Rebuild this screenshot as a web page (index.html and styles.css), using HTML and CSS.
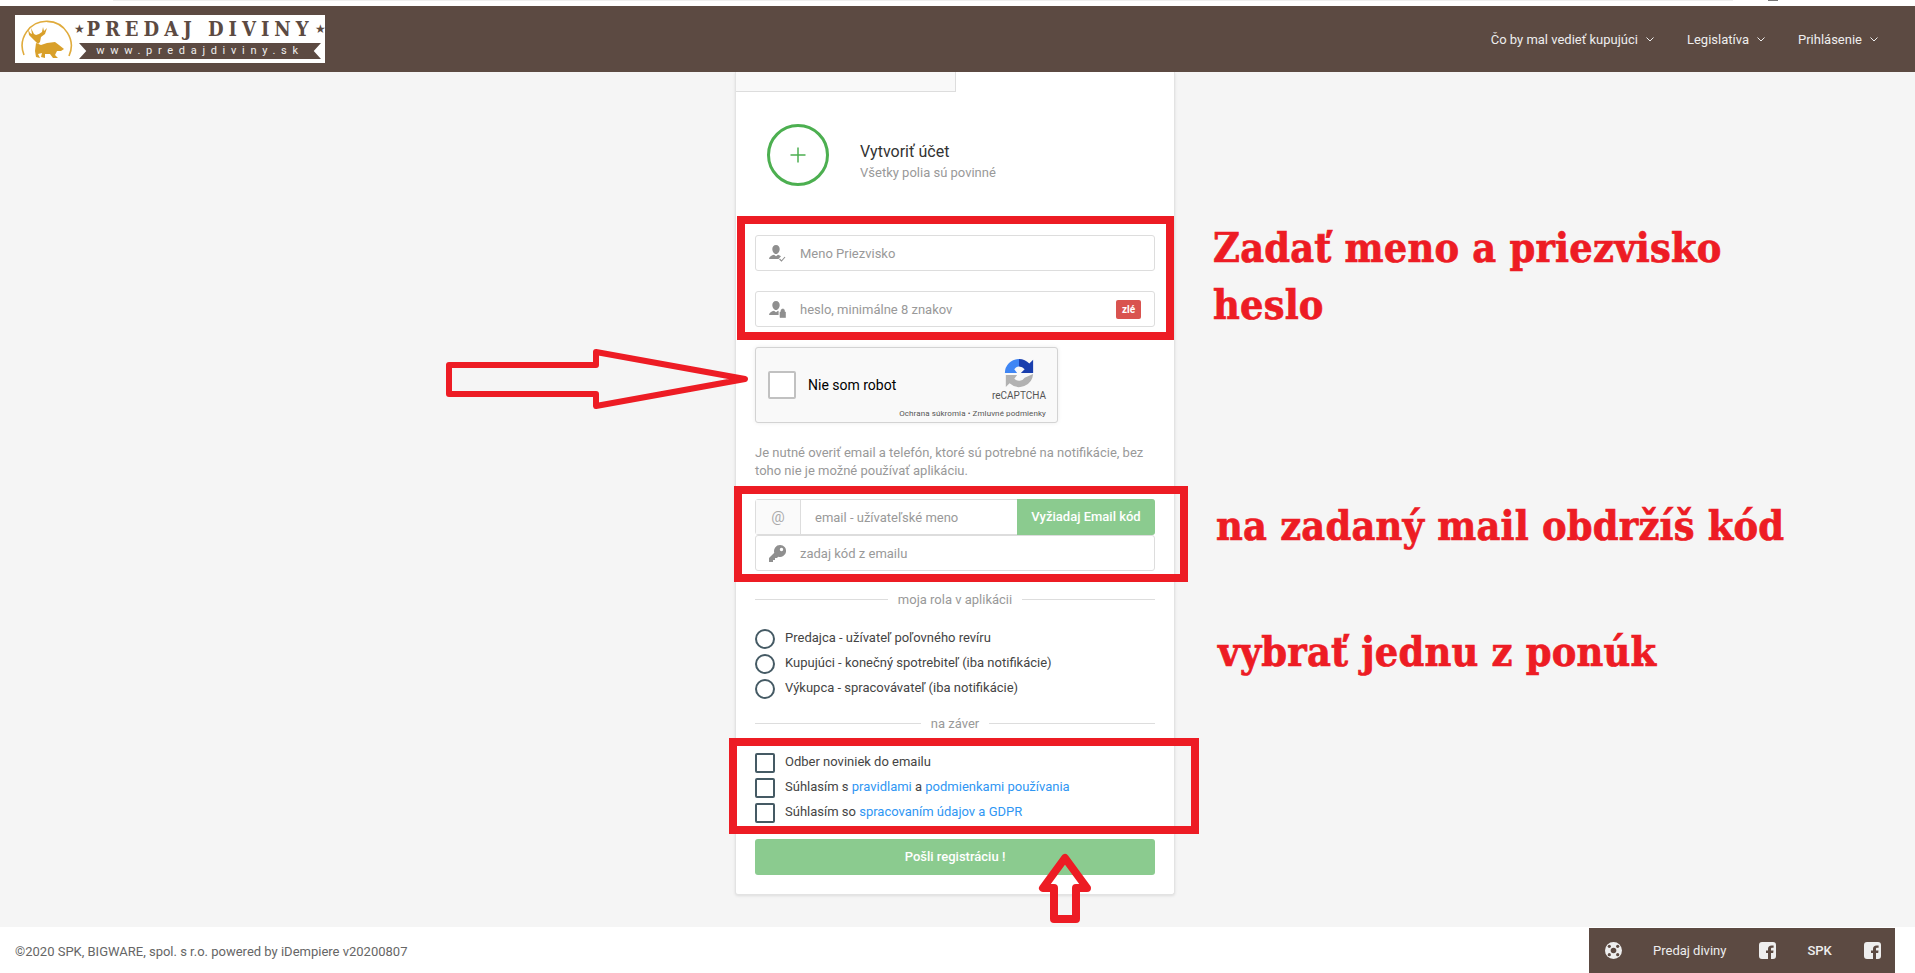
FILE: index.html
```html
<!DOCTYPE html>
<html>
  <head>
    <meta charset="utf-8">
    <title>Predaj diviny</title>
    <link rel="stylesheet" href="styles.css">
  </head>
  <body>
    <div class="topstrip"><span class="topstrip-line"></span><span class="topstrip-mark"></span></div>

    <header class="header">
      <a class="logo">
        <svg class="logo-emblem" width="60" height="48" viewBox="0 0 60 48">
          <path d="M9 40 A24.500 24.500 0 1 1 54 41" fill="none" stroke="#e0ab3c" stroke-width="1.600"/>
          <path d="M19 25 L14 20 L13 14 L15 18 L17 19 L16 13 L19 19 L21 20 L24 19 L27 17 L28 12 L29 16 L32 13 L30 19 L26 22 L25 27 L23 29 Z" fill="#d9a02a"/>
          <path d="M21 28 L26 30 L32 28 L40 27 L44 30 L49 34 L46 36 L42 36 L40 40 L43 43 L38 43 L35 39 L30 39 L30 43 L26 42 L27 38 L23 39 L25 43 L21 42 L20 36 Z" fill="#d9a02a"/>
        </svg>
        <div class="logo-text">
          <div class="logo-title"><span class="logo-star">★</span><span class="logo-name">PREDAJ DIVINY</span><span class="logo-star">★</span></div>
          <div class="logo-ribbon">www.predajdiviny.sk</div>
        </div>
      </a>
      <nav class="nav">
        <a>Čo by mal vedieť kupujúci<svg class="chevron" width="8" height="5" viewBox="0 0 8 5"><path d="M.5.5L4 4 7.500.5" fill="none" stroke="#eee"/></svg></a>
        <a>Legislatíva<svg class="chevron" width="8" height="5" viewBox="0 0 8 5"><path d="M.5.5L4 4 7.500.5" fill="none" stroke="#eee"/></svg></a>
        <a>Prihlásenie<svg class="chevron" width="8" height="5" viewBox="0 0 8 5"><path d="M.5.5L4 4 7.500.5" fill="none" stroke="#eee"/></svg></a>
      </nav>
    </header>

    <main class="main">
      <div class="card">
        <div class="tab"></div>

        <div class="card-head">
          <div class="plus-circle"><svg width="16" height="16" viewBox="0 0 16 16"><path d="M8 .5v15M.5 8h15" stroke="#4caf50" stroke-width="1.500"/></svg></div>
          <div class="card-titles">
            <div class="card-title">Vytvoriť účet</div>
            <div class="card-sub">Všetky polia sú povinné</div>
          </div>
        </div>

        <div class="field field-name">
          <svg class="field-icon" width="17" height="17" viewBox="0 0 17 17">
            <path d="M7 0c2.300 0 3.700 1.700 3.700 4S9.300 9 7 9 3.300 6.300 3.300 4 4.700 0 7 0zM0 14c.3-2.700 2.500-3.600 5-4.300l2 1.500 2-1.500c1.300.4 2.300.8 3 1.500L9.500 14z" fill="#8f8f8f"/>
            <path d="M10.500 14l2 2 3.500-4" fill="none" stroke="#8f8f8f" stroke-width="1.100"/>
          </svg>
          <span class="placeholder">Meno Priezvisko</span>
        </div>

        <div class="field field-pass">
          <svg class="field-icon" width="17" height="17" viewBox="0 0 17 17">
            <path d="M7 0c2.300 0 3.700 1.700 3.700 4S9.300 9 7 9 3.300 6.300 3.300 4 4.700 0 7 0zM0 14c.3-2.700 2.500-3.600 5-4.300l2 1.500 2-1.500.6.200V14z" fill="#8f8f8f"/>
            <path d="M11 11h5.500v5.500H11zM12 11V9.500c0-2 3.500-2 3.500 0V11" fill="#8f8f8f" stroke="#8f8f8f" stroke-width=".6" fill-rule="evenodd"/>
          </svg>
          <span class="placeholder">heslo, minimálne 8 znakov</span>
          <span class="badge">zlé</span>
        </div>

        <div class="captcha">
          <span class="captcha-box"></span>
          <span class="captcha-label">Nie som robot</span>
          <div class="captcha-brand">
            <svg width="32" height="32" viewBox="0 0 34 34">
              <path d="M2 17A15 15 0 0 1 17 2v8a7 7 0 0 0-5 3l3 4H2z" fill="#3f86f4"/>
              <path d="M17 2a15 15 0 0 1 11 5l4-4v14H19l4-4a8 8 0 0 0-6-3z" fill="#1a3fae"/>
              <path d="M32 18A15 15 0 0 1 7 28l-4 4V19h12l-3 4a7 7 0 0 0 11-1z" fill="#b2b2b2"/>
            </svg>
            <div class="captcha-name">reCAPTCHA</div>
          </div>
          <div class="captcha-links">Ochrana súkromia • Zmluvné podmienky</div>
        </div>

        <p class="note">Je nutné overiť email a telefón, ktoré sú potrebné na notifikácie, bez toho nie je možné používať aplikáciu.</p>

        <div class="email-group">
          <span class="addon">@</span>
          <span class="placeholder email-input">email - užívateľské meno</span>
          <span class="btn-code">Vyžiadaj Email kód</span>
        </div>

        <div class="field field-code">
          <svg class="field-icon" width="17" height="17" viewBox="0 0 17 17">
            <path d="M11 0a6 6 0 1 1-1.800 11.700L8 13H6v2H4v2H0v-4l5.300-5.200A6 6 0 0 1 11 0zm1.500 2.800a1.700 1.700 0 1 0 0 3.400 1.700 1.700 0 0 0 0-3.400z" fill="#8f8f8f" fill-rule="evenodd"/>
          </svg>
          <span class="placeholder">zadaj kód z emailu</span>
        </div>

        <div class="separator sep-role"><span>moja rola v aplikácii</span></div>

        <div class="options options-role">
          <label class="option"><span class="radio"></span>Predajca - užívateľ poľovného revíru</label>
          <label class="option"><span class="radio"></span>Kupujúci - konečný spotrebiteľ (iba notifikácie)</label>
          <label class="option"><span class="radio"></span>Výkupca - spracovávateľ (iba notifikácie)</label>
        </div>

        <div class="separator sep-end"><span>na záver</span></div>

        <div class="options options-end">
          <label class="option"><span class="check"></span>Odber noviniek do emailu</label>
          <label class="option"><span class="check"></span>Súhlasím s&nbsp;<a>pravidlami</a>&nbsp;a&nbsp;<a>podmienkami používania</a></label>
          <label class="option"><span class="check"></span>Súhlasím so&nbsp;<a>spracovaním údajov a GDPR</a></label>
        </div>

        <div class="btn-send">Pošli registráciu !</div>
      </div>
    </main>

    <footer class="footer">
      <div class="copyright">©2020 SPK, BIGWARE, spol. s r.o. powered by iDempiere v20200807</div>
      <div class="footer-links">
        <svg class="ring" width="17" height="17" viewBox="0 0 17 17">
          <circle cx="8.500" cy="8.500" r="8.500" fill="#eee"/>
          <circle cx="8.500" cy="8.500" r="2.800" fill="#5c4a42"/>
          <circle cx="4.300" cy="4.300" r="1.600" fill="#5c4a42"/>
          <circle cx="12.700" cy="4.300" r="1.600" fill="#5c4a42"/>
          <circle cx="4.300" cy="12.700" r="1.600" fill="#5c4a42"/>
          <circle cx="12.700" cy="12.700" r="1.600" fill="#5c4a42"/>
        </svg>
        <a class="footer-name">Predaj diviny</a>
        <svg class="fb fb-first" width="17" height="17" viewBox="0 0 17 17">
          <path d="M3 0h11a3 3 0 0 1 3 3v11a3 3 0 0 1-3 3h-2v-6h2.200l.3-2.500H12V7c0-.8.300-1.200 1.200-1.200h1.400V3.500h-2C10.300 3.500 9 5 9 7v1.500H7V11h2v6H3a3 3 0 0 1-3-3V3a3 3 0 0 1 3-3z" fill="#eee"/>
        </svg>
        <a class="footer-spk">SPK</a>
        <svg class="fb fb-last" width="17" height="17" viewBox="0 0 17 17">
          <path d="M3 0h11a3 3 0 0 1 3 3v11a3 3 0 0 1-3 3h-2v-6h2.200l.3-2.500H12V7c0-.8.300-1.200 1.200-1.200h1.400V3.500h-2C10.300 3.500 9 5 9 7v1.500H7V11h2v6H3a3 3 0 0 1-3-3V3a3 3 0 0 1 3-3z" fill="#eee"/>
        </svg>
      </div>
    </footer>

    <!-- red marks painted over the screenshot -->
    <svg class="marks" width="1915" height="973" viewBox="0 0 1915 973">
      <g fill="none" stroke="#ed1c24" stroke-width="8">
        <rect x="741" y="220" width="429" height="116"/>
        <rect x="738" y="490" width="446" height="88"/>
        <rect x="733" y="742" width="462" height="88"/>
      </g>
      <path d="M449 365H596V352L745 379L596 406V394H449Z" fill="none" stroke="#ed1c24" stroke-width="6" stroke-linejoin="round"/>
      <path d="M1065 858L1043 888H1054V919H1076V888H1087Z" fill="none" stroke="#ed1c24" stroke-width="8" stroke-linejoin="round"/>
    </svg>
    <div class="mark-text mark-name">Zadať meno a priezvisko<br>heslo</div>
    <div class="mark-text mark-mail">na zadaný mail obdržíš kód</div>
    <div class="mark-text mark-pick">vybrať jednu z ponúk</div>
  </body>
</html>
```

FILE: styles.css
```css
* {
  box-sizing: border-box;
}

html,
body {
  margin: 0;
  padding: 0;
}

body {
  display: flex;
  flex-direction: column;
  height: 973px;
  overflow: hidden;
  position: relative;
  font-family: Roboto, Arial, sans-serif;
  font-size: 13px;
  background-color: #fff;
  color: #444;
}

.topstrip {
  height: 6px;
  flex-shrink: 0;
  display: flex;
  background-color: #fff;
}

.topstrip-line {
  width: 1620px;
  height: 1px;
  margin-left: 113px;
  background-color: #eee;
}

.topstrip-mark {
  width: 10px;
  height: 1px;
  margin-left: 35px;
  background-color: #777;
}

.header {
  height: 66px;
  flex-shrink: 0;
  display: flex;
  align-items: center;
  justify-content: space-between;
  padding: 0 37px 0 15px;
  background-color: #5c4a42;
  z-index: 2;
}

.logo {
  width: 310px;
  height: 48px;
  display: flex;
  background-color: #fff;
}

.logo-emblem {
  flex-shrink: 0;
}

.logo-text {
  display: flex;
  flex-direction: column;
  align-items: center;
  width: 250px;
}

.logo-title {
  display: flex;
  align-items: center;
  height: 28px;
  color: #5c4a42;
  white-space: nowrap;
}

.logo-name {
  font-family: "DejaVu Serif Condensed", "DejaVu Serif", serif;
  font-weight: bold;
  font-size: 20px;
  letter-spacing: 5px;
}

.logo-star {
  font-size: 12px;
  margin: 0 1px;
}

.logo-ribbon {
  width: 242px;
  height: 16px;
  line-height: 16px;
  text-align: center;
  font-size: 11px;
  letter-spacing: 5.700px;
  color: #eee;
  background-color: #5c4a42;
  clip-path: polygon(0 0, 100% 0, 97% 50%, 100% 100%, 0 100%, 3% 50%);
}

.nav {
  display: flex;
  gap: 33px;
  color: #eee;
}

.nav a {
  display: flex;
  align-items: center;
}

.chevron {
  margin-left: 8px;
}

.main {
  height: 855px;
  flex-shrink: 0;
  display: flex;
  justify-content: center;
  align-items: flex-start;
  padding-right: 5px;
  background-color: #f5f5f5;
}

.card {
  width: 440px;
  padding: 0 19px 19px;
  background-color: #fff;
  border: 1px solid #e3e3e3;
  border-top: none;
  border-radius: 0 0 3px 3px;
  box-shadow: 0 1px 3px rgba(0, 0, 0, 0.1);
}

.tab {
  width: 220px;
  height: 20px;
  margin-left: -19px;
  background-color: #f9f9f9;
  border-right: 1px solid #ddd;
  border-bottom: 1px solid #ddd;
}

.card-head {
  display: flex;
  align-items: center;
  gap: 31px;
  margin: 32px 0 0 12px;
}

.card-titles {
  padding-top: 14px;
}

.plus-circle {
  width: 62px;
  height: 62px;
  display: flex;
  align-items: center;
  justify-content: center;
  border: 3px solid #4caf50;
  border-radius: 50%;
}

.card-title {
  font-size: 16px;
  line-height: 22px;
  color: #333;
}

.card-sub {
  font-size: 13px;
  line-height: 20px;
  color: #999;
}

.field {
  height: 36px;
  display: flex;
  align-items: center;
  padding: 0 13px;
  background-color: #fff;
  border: 1px solid #ddd;
  border-radius: 3px;
}

.field-name {
  margin-top: 49px;
}

.field-pass {
  margin-top: 20px;
}

.field-icon {
  flex-shrink: 0;
  margin-right: 14px;
}

.placeholder {
  color: #999;
}

.badge {
  margin-left: auto;
  width: 25px;
  height: 19px;
  line-height: 19px;
  text-align: center;
  font-size: 10px;
  font-weight: bold;
  color: #fff;
  background-color: #d9534f;
  border-radius: 2px;
}

.captcha {
  position: relative;
  width: 303px;
  height: 76px;
  margin-top: 20px;
  display: flex;
  align-items: center;
  padding: 0 12px;
  background-color: #f9f9f9;
  border: 1px solid #d3d3d3;
  border-radius: 3px;
  box-shadow: 0 0 4px rgba(0, 0, 0, 0.08);
}

.captcha-box {
  width: 28px;
  height: 28px;
  margin-right: 12px;
  background-color: #fff;
  border: 2px solid #c1c1c1;
  border-radius: 2px;
}

.captcha-label {
  font-size: 14px;
  color: #000;
}

.captcha-brand {
  position: absolute;
  right: 13px;
  top: 9px;
  width: 50px;
  display: flex;
  flex-direction: column;
  align-items: center;
}

.captcha-name {
  font-size: 10px;
  line-height: 12px;
  margin-top: 1px;
  color: #555;
}

.captcha-links {
  position: absolute;
  right: 11px;
  bottom: 4px;
  font-size: 8px;
  letter-spacing: 0.1px;
  color: #555;
}

.note {
  margin: 21px 0 0;
  line-height: 18px;
  color: #999;
}

.email-group {
  height: 36px;
  margin-top: 19px;
  display: flex;
  align-items: center;
  border: 1px solid #ddd;
  border-radius: 3px;
}

.addon {
  width: 45px;
  height: 100%;
  flex-shrink: 0;
  display: flex;
  align-items: center;
  justify-content: center;
  font-size: 15px;
  color: #aaa;
  background-color: #fafafa;
  border-right: 1px solid #ddd;
}

.email-input {
  padding-left: 14px;
}

.btn-code {
  width: 138px;
  height: 36px;
  margin: 0 -1px 0 auto;
  line-height: 36px;
  text-align: center;
  font-weight: 500;
  color: #fff;
  background-color: #8bcb8f;
  border-radius: 0 3px 3px 0;
}

.separator {
  height: 20px;
  display: flex;
  align-items: center;
  gap: 10px;
  color: #999;
}

.separator::before,
.separator::after {
  content: "";
  flex: 1;
  height: 1px;
  background-color: #ddd;
}

.sep-role {
  margin-top: 18px;
}

.sep-end {
  margin-top: 12px;
}

.options-role,
.options-end {
  margin-top: 17px;
}

.option {
  height: 25px;
  display: flex;
  align-items: center;
  padding-bottom: 2px;
  color: #444;
}

.option a {
  color: #2f96f3;
}

.radio,
.check {
  width: 20px;
  height: 20px;
  flex-shrink: 0;
  margin: 2px 10px 0 0;
  background-color: #fff;
  border: 2px solid #455a64;
}

.radio {
  border-radius: 50%;
}

.check {
  border-radius: 2px;
}

.btn-send {
  height: 36px;
  margin-top: 14px;
  line-height: 36px;
  text-align: center;
  font-weight: 500;
  color: #fff;
  background-color: #8bcb8f;
  border-radius: 3px;
}

.footer {
  flex: 1;
  display: flex;
  justify-content: space-between;
  align-items: flex-start;
  padding: 1px 20px 0 15px;
  background-color: #fff;
}

.copyright {
  margin-top: 16px;
  color: #666;
}

.footer-links {
  width: 306px;
  height: 45px;
  display: flex;
  align-items: center;
  padding-left: 16px;
  color: #eee;
  background-color: #5c4a42;
}

.footer-name {
  margin-left: 31px;
}

.fb-first {
  margin-left: 33px;
}

.footer-spk {
  margin-left: 31px;
  font-weight: 500;
}

.fb-last {
  margin-left: 32px;
}

.marks {
  position: absolute;
  left: 0;
  top: 0;
  z-index: 3;
  pointer-events: none;
}

.mark-text {
  position: absolute;
  z-index: 3;
  font-family: "DejaVu Serif Condensed", "DejaVu Serif", serif;
  font-weight: bold;
  font-size: 41px;
  line-height: 57px;
  letter-spacing: 0.2px;
  color: #ed1c24;
  white-space: nowrap;
  -webkit-text-stroke: 0.7px #ed1c24;
}

.mark-name {
  left: 1213px;
  top: 220px;
}

.mark-mail {
  left: 1216px;
  top: 498px;
}

.mark-pick {
  left: 1218px;
  top: 624px;
}
```
